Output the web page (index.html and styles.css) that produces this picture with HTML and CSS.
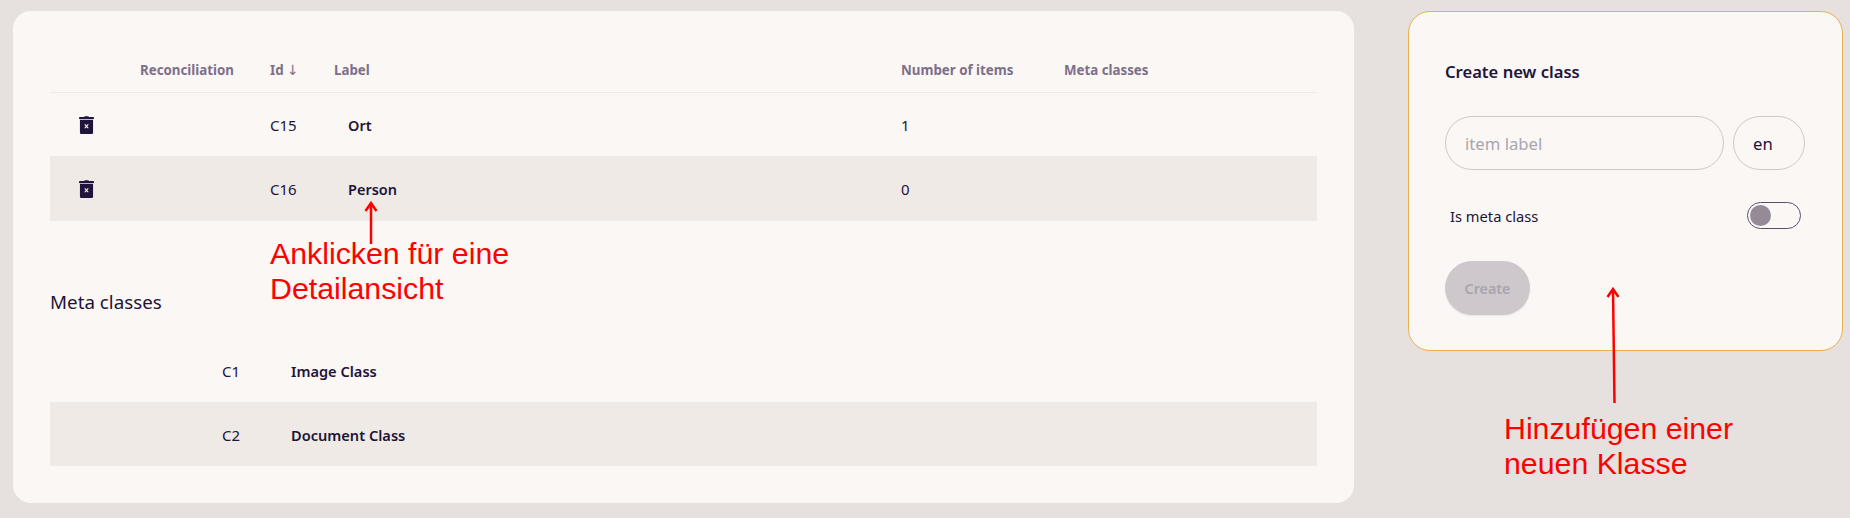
FILE: index.html
```html
<!DOCTYPE html>
<html lang="en">
<head>
    <meta charset="UTF-8">
    <title>Classes</title>
    <link rel="stylesheet" href="styles.css">
</head>
<body>

    <main class="panel">
        <table class="class-table">
            <colgroup>
                <col class="col-action">
                <col class="col-recon">
                <col class="col-id">
                <col class="col-label">
                <col class="col-count">
                <col>
            </colgroup>
            <thead>
                <tr>
                    <th></th>
                    <th>Reconciliation</th>
                    <th>Id <span class="sort">↓</span></th>
                    <th>Label</th>
                    <th>Number of items</th>
                    <th>Meta classes</th>
                </tr>
            </thead>
            <tbody>
                <tr>
                    <td class="action">
                        <svg class="trash" viewBox="0 0 16 20" preserveAspectRatio="none"><path d="M5.5 1.2 6 .3h4l.5.9H15a1 1 0 0 1 1 1v1H0v-1a1 1 0 0 1 1-1z"/><path fill-rule="evenodd" d="M1 4.2h14v14.3a1.4 1.4 0 0 1-1.4 1.4H2.400a1.400 1.400 0 0 1-1.400-1.400zM5.700 9.800l1.500 1.700-1.500 1.700.9.800 1.400-1.600 1.400 1.600.9-.800-1.500-1.700 1.500-1.700-.9-.800-1.400 1.600-1.400-1.600z"/></svg>
                    </td>
                    <td></td>
                    <td>C15</td>
                    <td class="name">Ort</td>
                    <td>1</td>
                    <td></td>
                </tr>
                <tr class="alt">
                    <td class="action">
                        <svg class="trash" viewBox="0 0 16 20" preserveAspectRatio="none"><path d="M5.5 1.2 6 .3h4l.5.9H15a1 1 0 0 1 1 1v1H0v-1a1 1 0 0 1 1-1z"/><path fill-rule="evenodd" d="M1 4.2h14v14.3a1.4 1.4 0 0 1-1.4 1.4H2.400a1.400 1.400 0 0 1-1.400-1.400zM5.700 9.800l1.500 1.700-1.500 1.700.9.800 1.400-1.600 1.400 1.600.9-.800-1.500-1.700 1.500-1.700-.9-.800-1.400 1.600-1.400-1.600z"/></svg>
                    </td>
                    <td></td>
                    <td>C16</td>
                    <td class="name">Person</td>
                    <td>0</td>
                    <td></td>
                </tr>
            </tbody>
        </table>

        <h2 class="section-title">Meta classes</h2>

        <table class="meta-table">
            <colgroup>
                <col class="col-meta-space">
                <col class="col-meta-id">
                <col>
            </colgroup>
            <tbody>
                <tr>
                    <td></td>
                    <td>C1</td>
                    <td class="strong">Image Class</td>
                </tr>
                <tr class="alt">
                    <td></td>
                    <td>C2</td>
                    <td class="strong">Document Class</td>
                </tr>
            </tbody>
        </table>
    </main>

    <aside class="create-card">
        <h3 class="create-title">Create new class</h3>
        <div class="input-row">
            <input class="field field-label" type="text" placeholder="item label">
            <input class="field field-lang" type="text" value="en">
        </div>
        <div class="toggle-row">
            <span class="toggle-label">Is meta class</span>
            <span class="toggle"><span class="knob"></span></span>
        </div>
        <button class="create-button" disabled>Create</button>
    </aside>

    <!-- Anmerkungen -->
    <svg class="arrow arrow-detail" viewBox="0 0 16 44"><path d="M8 43V2M2.500 10 8 2l5.500 8"/></svg>
    <p class="note note-detail">Anklicken für eine<br>Detailansicht</p>
    <svg class="arrow arrow-create" viewBox="0 0 16 118"><path d="M9.500 116 8 2M2.500 10 8 2l5.500 8"/></svg>
    <p class="note note-create">Hinzufügen einer<br>neuen Klasse</p>

</body>
</html>
```

FILE: styles.css
```css
:root {
    --background-color: #e6e1de;
    --panel-color: #fbf7f4;
    --row-color: #efeae6;
    --font-color: #21143a;
    --header-color: #7d6f8a;
    --note-color: #ff0000;
}

* {
    box-sizing: border-box;
    margin: 0;
    padding: 0;
}

body {
    font-family: "Noto Sans", "Open Sans", sans-serif;
    font-size: 15px;
    background-color: var(--background-color);
    color: var(--font-color);
    display: flex;
    align-items: flex-start;
    gap: 54px;
    height: 518px;
    padding: 11px 7px 15px 13px;
    overflow: hidden;
    position: relative;
}

.panel {
    width: 1341px;
    height: 492px;
    background-color: var(--panel-color);
    border-radius: 18px;
    padding: 37px;
}

table {
    width: 100%;
    table-layout: fixed;
    border-collapse: collapse;
}

th {
    height: 44px;
    text-align: left;
    font-size: 13.300px;
    font-weight: 700;
    color: var(--header-color);
    border-bottom: 1px solid #efeae6;
}

td {
    height: 64px;
    padding-top: 1px;
}

.class-table .alt td {
    height: 65px;
}

.sort {
    font-family: "DejaVu Sans", sans-serif;
    font-size: 14px;
    font-weight: 400;
}

.col-action { width: 90px; }
.col-recon { width: 130px; }
.col-id { width: 64px; }
.col-label { width: 567px; }
.col-count { width: 163px; }

.col-meta-space { width: 172px; }
.col-meta-id { width: 69px; }

.alt td {
    background-color: var(--row-color);
}

.action {
    padding-left: 29px;
}

.trash {
    display: block;
    width: 15px;
    height: 18px;
    fill: var(--font-color);
}

.name {
    padding-left: 14px;
    font-size: 14.500px;
    font-weight: 600;
}

.strong {
    font-size: 14.600px;
    font-weight: 600;
}

.section-title {
    font-size: 18.800px;
    font-weight: 400;
    line-height: 24px;
    margin-top: 69px;
    margin-bottom: 24px;
}

.create-card {
    width: 435px;
    height: 340px;
    background-color: var(--panel-color);
    border: 1px solid #e8b04f;
    border-radius: 22px;
    padding: 48px 37px 36px 36px;
}

.create-title {
    font-size: 16.600px;
    font-weight: 600;
    line-height: 24px;
    margin-bottom: 32px;
}

.input-row {
    display: flex;
    gap: 9px;
    margin-bottom: 32px;
}

.field {
    height: 54px;
    border: 1px solid #cfc9cb;
    border-radius: 27px;
    background: transparent;
    font-family: inherit;
    font-size: 16.700px;
    color: var(--font-color);
    padding: 0 19px;
    outline: none;
}

.field::placeholder {
    color: #a9a6ae;
    opacity: 1;
}

.field-label { width: 279px; }
.field-lang { width: 72px; }

.toggle-row {
    display: flex;
    justify-content: space-between;
    align-items: center;
    padding: 0 4px 0 5px;
    margin-bottom: 32px;
}

.toggle-label {
    font-size: 14.700px;
    padding-top: 1px;
}

.toggle {
    display: block;
    width: 54px;
    height: 27px;
    border: 1px solid #5c4d6e;
    border-radius: 14px;
    padding: 2px;
}

.knob {
    display: block;
    width: 21px;
    height: 21px;
    border-radius: 50%;
    background-color: #958a98;
}

.create-button {
    display: block;
    width: 85px;
    height: 54px;
    border: none;
    border-radius: 27px;
    background-color: #cec8cc;
    color: #aaa3ae;
    font-family: inherit;
    font-size: 14.300px;
    font-weight: 600;
    box-shadow: 0 1px 2px rgba(0, 0, 0, 0.08);
}

.note {
    position: absolute;
    font-family: "Liberation Sans", Arial, sans-serif;
    font-size: 30.300px;
    line-height: 35px;
    color: var(--note-color);
}

.note-detail {
    left: 270px;
    top: 236px;
}

.note-create {
    left: 1504px;
    top: 411px;
}

.arrow {
    position: absolute;
    fill: none;
    stroke: var(--note-color);
    stroke-width: 2.500;
}

.arrow-detail {
    left: 363px;
    top: 201px;
    width: 16px;
    height: 44px;
}

.arrow-create {
    left: 1605px;
    top: 287px;
    width: 16px;
    height: 118px;
}
```
